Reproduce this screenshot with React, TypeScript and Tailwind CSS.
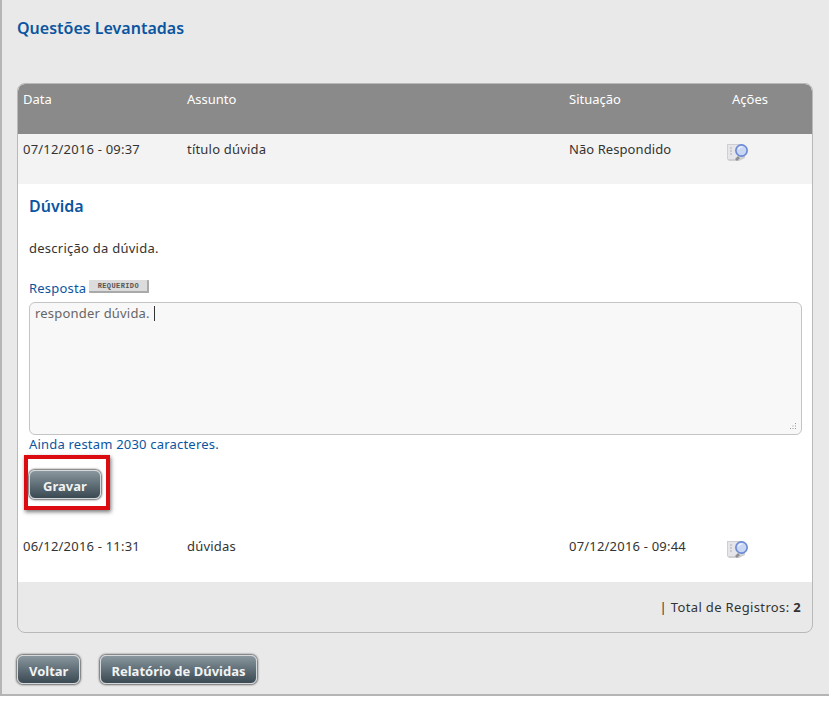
import type { ReactNode } from "react";

const FONT = "[font-family:'Noto_Sans',sans-serif]";

function DetailsIcon() {
  return (
    <svg width="24" height="21" viewBox="0 0 24 21" className="block">
      <path d="M1 3h15l3 2v12l-6 3H3l-2-2z" fill="#cfcfd2" />
      <path d="M2 4h13v12l-4 2H2z" fill="#e6e6ea" />
      <path d="M4 7h2M4 10h2M4 13h2" stroke="#b0b0b5" strokeWidth="1" />
      <path d="M9 18l3-3 2 2-3 3z" fill="#8f8f92" />
      <circle cx="15.500" cy="9.500" r="6.500" fill="#6d8ad6" />
      <circle cx="15.500" cy="9.500" r="4.800" fill="#c9d7f3" />
      <path d="M12.500 8.500a3.500 3.500 0 0 1 4-2.500" stroke="#eef3fc" strokeWidth="1.200" fill="none" />
    </svg>
  );
}

function DarkButton({ label, className }: { label: string; className: string }) {
  return (
    <button className={`h-[29px] rounded-[6px] border border-[#d5d9db] bg-gradient-to-b from-[#8a979f] to-[#3a4952] text-[13px] font-bold tracking-normal text-[#f1f3f3] shadow-[0_0_2px_1px_#666] ${className}`}>
      {label}
    </button>
  );
}

function Row({ date, subject, status, className }: { date: string; subject: string; status: ReactNode; className: string }) {
  return (
    <div className={`grid grid-cols-[164px_382px_158px_1fr] pl-[5px] text-[13px] text-[#333] ${className}`}>
      <span>{date}</span>
      <span>{subject}</span>
      <span>{status}</span>
      <span className="mt-px -ml-[1px]">
        <DetailsIcon />
      </span>
    </div>
  );
}

export default function App() {
  return (
    <div className={`${FONT} h-[701px] w-[829px] overflow-hidden bg-white tracking-[0.2px]`}>
      <div className="h-[696px] border-b-2 border-l-2 border-[#b5b5b5] bg-[#e9e9e9] pl-[15px] pr-[16px]">
        <h1 className="pt-[17px] text-[16px] leading-[22px] font-semibold tracking-normal text-[#0b559f]">Questões Levantadas</h1>

        <div className="mt-[44px] h-[550px] overflow-hidden rounded-[8px] border border-[#b9b9b9]">
          <div className="grid h-[50px] grid-cols-[164px_382px_163px_1fr] rounded-t-[7px] bg-[#8a8a8a] pt-[6px] pl-[5px] text-[13px] tracking-normal text-white">
            <span>Data</span>
            <span>Assunto</span>
            <span>Situação</span>
            <span>Ações</span>
          </div>

          <Row
            date="07/12/2016 - 09:37"
            subject="título dúvida"
            status={<span className="tracking-[0.07px]">Não Respondido</span>}
            className="h-[50px] bg-[#f3f3f3] pt-[6px]"
          />

          <div className="h-[346px] bg-white pt-[11px] pl-[11px]">
            <h2 className="text-[16px] leading-[22px] font-semibold tracking-normal text-[#0b559f]">Dúvida</h2>
            <p className="mt-[22px] text-[13px] leading-[18px] tracking-[0.25px] text-[#333]">descrição da dúvida.</p>

            <div className="mt-[22px] flex items-center gap-[3px] text-[13px] leading-[18px] text-[#0b559f]">
              <span>Resposta</span>
              <span className="mb-[3px] flex h-[13px] w-[60px] items-center justify-center rounded-[1px] border-r-2 border-b-2 border-[#a9a9a9] bg-[#dcdcdc] font-['Liberation_Mono',monospace] text-[7px] font-bold tracking-[0.4px] text-[#555]">
                REQUERIDO
              </span>
            </div>

            <div className="relative mt-[5px] h-[133px] w-[773px] rounded-[6px] border border-[#c4c4c4] bg-[#f8f8f8] px-[5px] text-[13px] leading-[18px] text-[#666]">
              <span>responder dúvida.</span>
              <span className="ml-[4px] inline-block h-[15px] w-px translate-y-[3px] bg-[#333]" />
              <svg width="10" height="10" viewBox="0 0 10 10" className="absolute right-[4px] bottom-[2px]">
                <path d="M8.500 1v1M6 3.500v1M8.500 3.500v1M3.500 6v1M6 6v1M8.500 6v1" stroke="#9a9a9a" strokeWidth="1" />
              </svg>
            </div>

            <p className="text-[13px] leading-[18px] text-[#0b559f]">Ainda restam 2030 caracteres.</p>

            <div className="mt-[2px] -ml-[5px] inline-block h-[55px] w-[86px] border-4 border-[#dc0b12] pt-[11px] pl-[1px] shadow-[1px_2px_4px_#777]">
              <DarkButton label="Gravar" className="px-[13px] pt-[5px]" />
            </div>
          </div>

          <Row date="06/12/2016 - 11:31" subject="dúvidas" status="07/12/2016 - 09:44" className="h-[52px] bg-white pt-[7px]" />

          <div className="pt-[15px] pr-[11px] text-right text-[13px] leading-[20px] tracking-[0.35px] text-[#333]">
            | Total de Registros: <b>2</b>
          </div>
        </div>

        <div className="mt-[22px] flex gap-[20px]">
          <DarkButton label="Voltar" className="px-[11px] pt-[4px]" />
          <DarkButton label="Relatório de Dúvidas" className="px-[10px] pt-[4px]" />
        </div>
      </div>
    </div>
  );
}
